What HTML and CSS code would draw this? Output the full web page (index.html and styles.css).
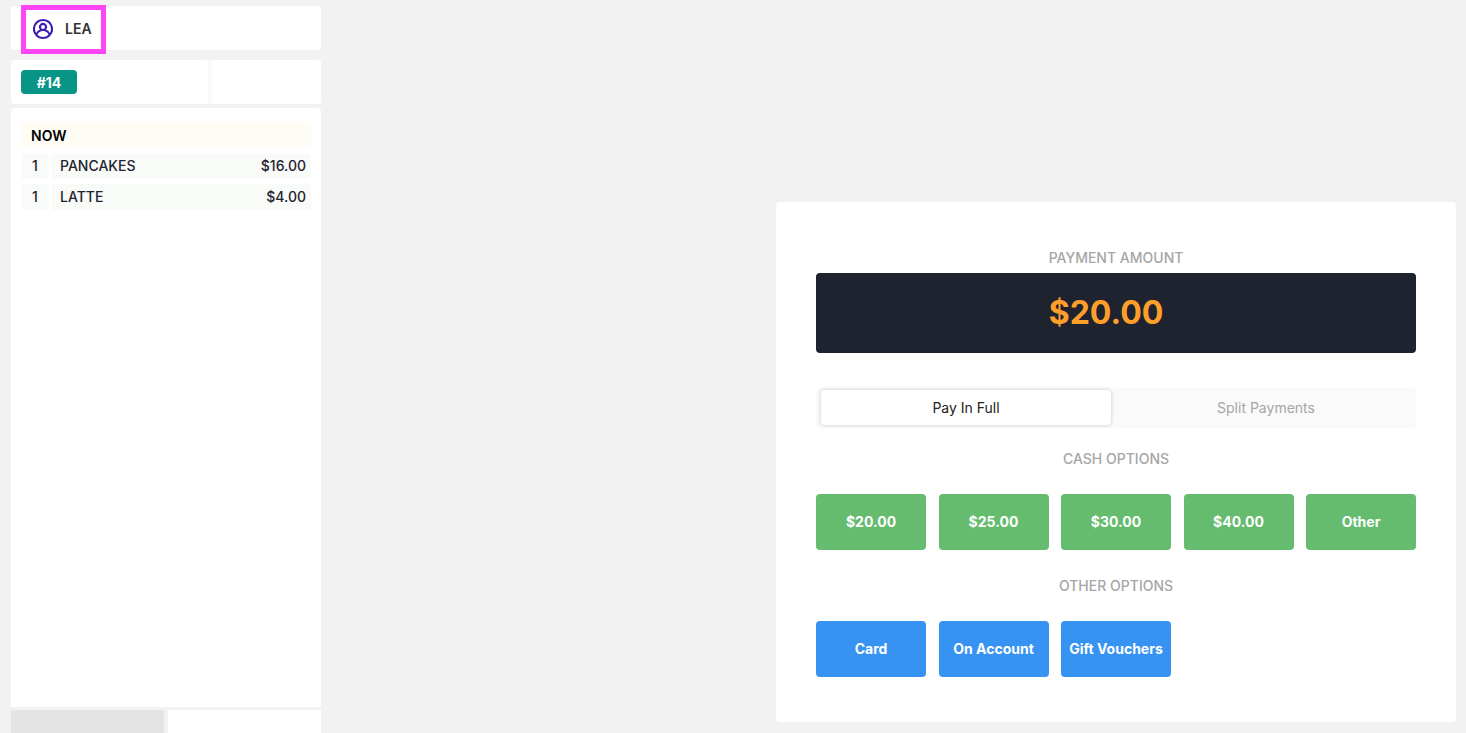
FILE: index.html
```html
<!DOCTYPE html>
<html lang="en">
<head>
<meta charset="utf-8">
<meta name="viewport" content="width=device-width, initial-scale=1">
<title>Payment</title>
<link rel="stylesheet" href="styles.css">
</head>
<body>
<div class="app">
  <aside class="order">
    <header class="order-header">
      <button class="user" type="button">
        <svg class="user-icon" viewBox="2 2 20 20" fill="currentColor" aria-hidden="true">
          <path d="M12,2A10,10,0,0,0,4.65,18.76h0a10,10,0,0,0,14.7,0h0A10,10,0,0,0,12,2Zm0,18a8,8,0,0,1-5.55-2.25,6,6,0,0,1,11.1,0A8,8,0,0,1,12,20ZM10,10a2,2,0,1,1,2,2A2,2,0,0,1,10,10Zm8.91,6A8,8,0,0,0,15,12.62a4,4,0,1,0-6,0A8,8,0,0,0,5.09,16,7.92,7.92,0,0,1,4,12a8,8,0,0,1,16,0A7.92,7.92,0,0,1,18.91,16Z"/>
        </svg>
        <span>LEA</span>
      </button>
    </header>
    <div class="order-info">
      <div class="info-cell"><span class="order-number">#14</span></div>
      <div class="info-cell"></div>
    </div>
    <section class="order-items">
      <h2 class="course">NOW</h2>
      <ul class="items">
        <li class="item"><span class="qty">1</span><span class="line"><span>PANCAKES</span><span>$16.00</span></span></li>
        <li class="item"><span class="qty">1</span><span class="line"><span>LATTE</span><span>$4.00</span></span></li>
      </ul>
    </section>
    <footer class="order-footer">
      <div class="foot foot-muted"></div>
      <div class="foot"></div>
    </footer>
  </aside>
  <main class="payment">
    <h1 class="label">PAYMENT AMOUNT</h1>
    <output class="amount">$20.00</output>
    <div class="tabs" role="tablist">
      <button class="tab tab-active" type="button" role="tab" aria-selected="true">Pay In Full</button>
      <button class="tab" type="button" role="tab" aria-selected="false">Split Payments</button>
    </div>
    <h2 class="label">CASH OPTIONS</h2>
    <div class="options">
      <button class="option cash" type="button">$20.00</button>
      <button class="option cash" type="button">$25.00</button>
      <button class="option cash" type="button">$30.00</button>
      <button class="option cash" type="button">$40.00</button>
      <button class="option cash" type="button">Other</button>
    </div>
    <h2 class="label">OTHER OPTIONS</h2>
    <div class="options">
      <button class="option other" type="button">Card</button>
      <button class="option other" type="button">On Account</button>
      <button class="option other" type="button">Gift Vouchers</button>
    </div>
  </main>
</div>
</body>
</html>
```
FILE: styles.css
```css
* {
  box-sizing: border-box;
}

body {
  margin: 0;
  background: #f2f2f2;
  color: #1f2330;
  font-family: Inter, "Liberation Sans", sans-serif;
  font-size: 14px;
  line-height: 20px;
}

h1, h2, ul {
  margin: 0;
  padding: 0;
  font-size: 14px;
}

button {
  border: 0;
  font: inherit;
  cursor: pointer;
}

.app {
  display: flex;
  justify-content: space-between;
  gap: 20px;
  min-height: 100vh;
  padding: 0 10px 0 11px;
}

.order {
  display: flex;
  flex: 0 0 310px;
  flex-direction: column;
  padding-top: 6px;
}

.order-header {
  display: flex;
  align-items: center;
  height: 44px;
  margin-bottom: 10px;
  padding: 2px 0 0 10px;
  background: #fff;
  border-radius: 4px;
}

.user {
  display: flex;
  flex: none;
  align-items: center;
  gap: 12px;
  height: 49px;
  padding: 0 9px 0 7px;
  background: #fff;
  border: 5px solid #ff45f6;
  color: #333;
  font-weight: 600;
}

.user-icon {
  width: 20px;
  height: 20px;
  color: #3b1bb0;
}

.order-info {
  display: grid;
  grid-template-columns: 9fr 5fr;
  gap: 4px;
  height: 44px;
  margin-bottom: 4px;
  background: #fafafa;
  border-radius: 4px;
}

.info-cell {
  display: flex;
  align-items: center;
  padding: 0 10px;
  background: #fff;
  border-radius: 4px;
}

.order-number {
  width: 56px;
  padding: 3px 0 1px;
  background: #089587;
  border-radius: 4px;
  color: #fff;
  font-weight: 700;
  text-align: center;
}

.order-items {
  flex: 1;
  padding: 14px 10px;
  background: #fff;
  border-radius: 4px 4px 0 0;
}

.course {
  padding: 4px 10px 2px;
  background: #fffcf6;
  border-radius: 4px;
  color: #000;
  font-weight: 600;
}

.items {
  display: grid;
  gap: 5px;
  margin-top: 5px;
  list-style: none;
  font-weight: 500;
}

.item {
  display: flex;
  gap: 2px;
}

.qty, .line {
  padding: 3px 5px;
  background: #f9fbf8;
  border-radius: 4px;
}

.qty {
  flex: 0 0 28px;
  text-align: center;
}

.line {
  display: flex;
  flex: 1;
  justify-content: space-between;
  padding-left: 9px;
}

.order-footer {
  display: flex;
  gap: 4px;
  height: 23px;
  margin-top: 3px;
}

.foot {
  flex: 1;
  background: #fff;
}

.foot-muted {
  background: #e4e4e4;
}

.payment {
  display: flex;
  flex: 0 1 680px;
  flex-direction: column;
  align-self: flex-end;
  margin-bottom: 11px;
  padding: 46px 40px 45px;
  background: #fff;
  border-radius: 4px;
}

.label {
  color: #a6a6a6;
  font-weight: 500;
  text-align: center;
}

.amount {
  margin: 5px 0 35px;
  padding: 20px 20px 20px 0;
  background: #1f2330;
  border-radius: 4px;
  color: #ff9f2b;
  font-size: 32px;
  font-weight: 700;
  line-height: 40px;
  text-align: center;
}

.tabs {
  display: flex;
  gap: 10px;
  height: 40px;
  margin-bottom: 21px;
  padding: 2px 5px 3px;
  background: #fafafa;
  border-radius: 4px;
}

.tab {
  flex: 1;
  background: none;
  border-radius: 4px;
  color: #a6a6a6;
}

.tab-active {
  background: #fff;
  box-shadow: 0 0 4px rgba(0, 0, 0, 0.2);
  color: #222;
}

.options {
  display: grid;
  grid-template-columns: repeat(5, 110px);
  justify-content: space-between;
  margin-top: 25px;
}

.options + .label {
  margin-top: 26px;
}

.option {
  height: 56px;
  padding: 0;
  border-radius: 4px;
  color: #fff;
  font-weight: 700;
}

.cash {
  background: #65bc6e;
}

.other {
  background: #3793f1;
}
```
